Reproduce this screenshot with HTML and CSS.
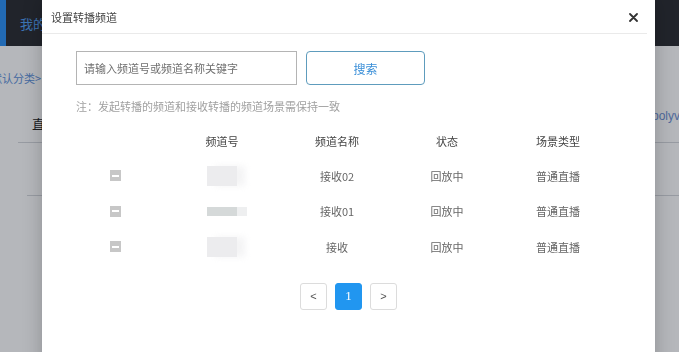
FILE: index.html
```html
<!DOCTYPE html>
<html lang="zh-CN">
<head>
<meta charset="utf-8">
<title>设置转播频道</title>
<link rel="stylesheet" href="styles.css">
</head>
<body>
<div class="page">
  <header class="topbar">
    <span class="brand-strip"></span>
    <span class="nav-item">我的</span>
  </header>
  <div class="crumb">默认分类&gt;</div>
  <div class="account">polyv</div>
  <div class="list">
    <div class="list-head">直</div>
    <div class="list-row first"></div>
    <div class="list-row second"></div>
  </div>
</div>
<div class="mask"></div>
<div class="modal">
  <div class="modal-head">
    <span class="modal-title">设置转播频道</span>
    <svg class="close" width="9" height="9" viewBox="0 0 9 9"><path d="M1 1L8 8M8 1L1 8" stroke="#333" stroke-width="1.8" stroke-linecap="round"/></svg>
  </div>
  <div class="modal-body">
    <div class="search">
      <input class="search-input" type="text" placeholder="请输入频道号或频道名称关键字">
      <button class="search-btn">搜索</button>
    </div>
    <p class="note">注：发起转播的频道和接收转播的频道场景需保持一致</p>
    <div class="table">
      <div class="tr th">
        <span></span><span>频道号</span><span>频道名称</span><span>状态</span><span>场景类型</span>
      </div>
      <div class="tr">
        <span><i class="check"></i></span>
        <span class="blur-cell"><i class="blur tall"></i></span>
        <span>接收02</span><span>回放中</span><span>普通直播</span>
      </div>
      <div class="tr">
        <span><i class="check"></i></span>
        <span class="blur-cell"><i class="blur thin"></i></span>
        <span>接收01</span><span>回放中</span><span>普通直播</span>
      </div>
      <div class="tr">
        <span><i class="check"></i></span>
        <span class="blur-cell"><i class="blur tall"></i></span>
        <span>接收</span><span>回放中</span><span>普通直播</span>
      </div>
    </div>
    <div class="pager">
      <button class="pg">&lt;</button>
      <button class="pg active">1</button>
      <button class="pg">&gt;</button>
    </div>
  </div>
</div>
</body>
</html>
```
FILE: styles.css
```css
html, body {
  margin: 0;
  padding: 0;
  width: 679px;
  height: 352px;
  overflow: hidden;
  font-family: "Noto Sans CJK SC", "Noto Sans", sans-serif;
}

.page {
  width: 679px;
  height: 352px;
  background: #fcfcfd;
  display: flex;
  flex-direction: column;
}

.topbar {
  height: 46px;
  background: #292a2f;
  display: flex;
  align-items: center;
  flex-shrink: 0;
}
.brand-strip {
  width: 6px;
  height: 46px;
  background: #2a8ef2;
}
.nav-item {
  margin-left: 14px;
  font-size: 13px;
  color: #4f9cf0;
  line-height: 16px;
  margin-top: 1px;
}

.crumb {
  margin-top: 24px;
  margin-left: -9px;
  font-size: 11px;
  line-height: 16px;
  color: #5b8fd6;
}
.account {
  margin-top: 23px;
  padding-left: 652px;
  font-family: "Liberation Sans", Arial, sans-serif;
  font-size: 12px;
  line-height: 14px;
  color: #6b8fd0;
  white-space: nowrap;
}

.list {
  display: flex;
  flex-direction: column;
}
.list-head {
  margin-top: -7px;
  padding-left: 32px;
  font-size: 13px;
  line-height: 16px;
  color: #222;
  height: 26px;
}
.list-row {
  height: 52px;
  border-top: 1px solid #d2d4d9;
}
.list-row.first { margin-left: 18px; }
.list-row.second { margin-left: 27px; }

.mask {
  position: fixed;
  inset: 0;
  background: rgba(18, 22, 36, 0.3);
}

.modal {
  position: absolute;
  left: 42px;
  top: 0;
  width: 613px;
  height: 380px;
  background: #fff;
  box-shadow: 0 0 18px rgba(0, 0, 0, 0.22);
}

.modal-head {
  height: 33px;
  margin-right: 8px;
  padding: 0 9px 0 9px;
  border-bottom: 1px solid #eaeaea;
  display: flex;
  align-items: center;
  justify-content: space-between;
}
.modal-title {
  font-size: 11px;
  line-height: 14px;
  color: #444;
}
.close {
  margin-top: 1px;
}

.modal-body {
  display: flex;
  flex-direction: column;
  padding-top: 17px;
}

.search {
  display: flex;
  gap: 9px;
  margin-left: 34px;
}
.search-input {
  width: 221px;
  height: 34px;
  box-sizing: border-box;
  border: 1px solid #b4b4b4;
  border-radius: 0;
  padding: 0 7px;
  font-family: inherit;
  font-size: 11px;
  color: #555;
  outline: none;
}
.search-input::placeholder {
  color: #6f6f6f;
}
.search-btn {
  width: 119px;
  height: 34px;
  box-sizing: border-box;
  border: 1px solid #5e9cbd;
  border-radius: 4px;
  background: #fff;
  font-family: inherit;
  font-size: 12px;
  color: #3a8fd8;
  padding: 0;
}

.note {
  margin: 14px 0 0 34px;
  font-size: 11px;
  line-height: 14px;
  color: #a0a0a0;
}

.table {
  margin: 10px 0 0 18px;
  display: flex;
  flex-direction: column;
}
.tr {
  display: grid;
  grid-template-columns: 110px 104px 126px 94px 128px;
  height: 35.5px;
  align-items: center;
  font-size: 11px;
  line-height: 14px;
  color: #666;
}
.tr > span {
  display: flex;
  justify-content: center;
  align-items: center;
}
.th {
  height: 35px;
  color: #444;
}

.check {
  display: flex;
  align-items: center;
  justify-content: center;
  width: 11px;
  height: 11px;
  background: #c7c7c7;
}
.check::after {
  content: "";
  width: 7px;
  height: 2px;
  background: #fff;
}

.blur-cell {
  justify-content: flex-start !important;
  padding-left: 37px;
}
.blur {
  display: block;
  width: 30px;
}
.blur.tall {
  height: 20px;
  background: #ececee;
  box-shadow: 8px 0 6px rgba(236, 236, 238, 0.6);
}
.blur.thin {
  height: 9px;
  background: #d5d9d9;
  box-shadow: 10px 0 0 #eeeff0;
}

.pager {
  margin-top: 18px;
  display: flex;
  justify-content: center;
  gap: 8px;
}
.pg {
  width: 27px;
  height: 27px;
  box-sizing: border-box;
  border: 1px solid #dcdcdc;
  border-radius: 3px;
  background: #fff;
  font-family: "Liberation Sans", Arial, sans-serif;
  font-size: 11px;
  color: #555;
  padding: 0;
}
.pg.active {
  background: #2196f0;
  border-color: #2196f0;
  color: #fff;
  font-family: "Liberation Serif", serif;
  font-size: 13px;
}
```
